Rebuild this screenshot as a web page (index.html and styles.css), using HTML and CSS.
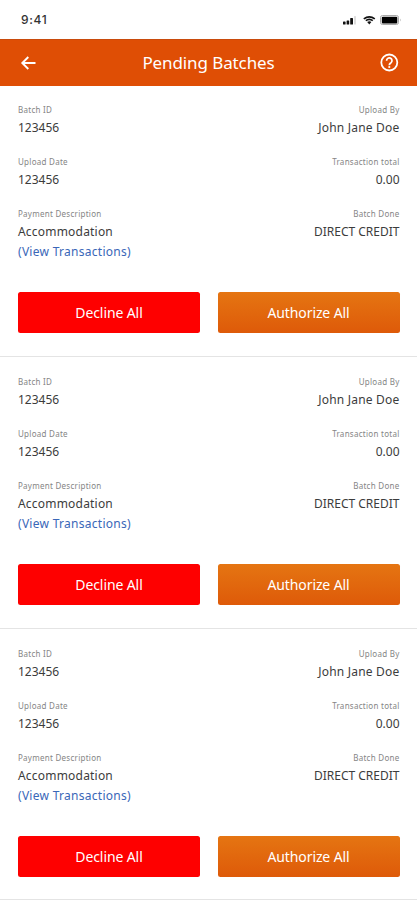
FILE: index.html
```html
<!DOCTYPE html>
<html lang="en">
<head>
<meta charset="utf-8">
<title>Pending Batches</title>
<link rel="stylesheet" href="styles.css">
</head>
<body>
<div class="status">
  <span class="time">9:41</span>
  <svg class="indicators" width="60" height="12" viewBox="0 0 60 12">
    <g fill="#111"><rect x="1" y="7.500" width="2.6" height="3" rx=".6"/><rect x="4.6" y="6.500" width="2.6" height="4" rx=".6"/><rect x="8.2" y="4" width="2.8" height="6.500" rx=".6"/></g>
    <rect x="12" y="2" width="2" height="8.500" rx=".6" fill="#ddd"/>
    <path d="M21.800 4.900Q27.300 .700 32.800 4.900M23.800 6.700Q27.300 4 30.800 6.700" fill="none" stroke="#111" stroke-width="1.700"/>
    <path d="M25.200 7.900Q27.300 6.400 29.400 7.900L27.300 10.400z" fill="#111"/>
    <rect x="38.500" y="1.500" width="18" height="9" rx="2" fill="#fff" stroke="#aaa"/>
    <rect x="39.800" y="2.700" width="15.500" height="6.700" rx="1" fill="#000"/>
    <path d="M58 4.500v3q1.300-1.500 0-3z" fill="#999"/>
  </svg>
</div>
<header class="bar">
  <svg class="icon" width="20" height="20" viewBox="0 0 20 20"><path d="M17.500 10H4.500M10.300 4L4.300 10l6 6" fill="none" stroke="#fff" stroke-width="1.900"/></svg>
  <h1>Pending Batches</h1>
  <svg class="icon" width="20" height="20" viewBox="0 0 20 20"><circle cx="10.300" cy="9.500" r="8" fill="none" stroke="#fff" stroke-width="1.800"/><path d="M7.600 7.700a2.700 2.700 0 1 1 4.500 1.900C11 10.500 10.300 10.800 10.300 12.200" fill="none" stroke="#fff" stroke-width="1.700"/><rect x="9.400" y="13.100" width="1.800" height="1.800" fill="#fff"/></svg>
</header>
<main>
  <section class="batch">
    <dl>
      <div><dt>Batch ID</dt><dd class="figure">123456</dd></div>
      <div><dt>Upload By</dt><dd>John Jane Doe</dd></div>
      <div><dt>Upload Date</dt><dd class="figure">123456</dd></div>
      <div><dt>Transaction total</dt><dd class="figure">0.00</dd></div>
      <div><dt>Payment Description</dt><dd>Accommodation</dd><dd class="link">(View Transactions)</dd></div>
      <div><dt>Batch Done</dt><dd class="figure">DIRECT CREDIT</dd></div>
    </dl>
    <div class="actions"><button class="decline">Decline All</button><button class="authorize">Authorize All</button></div>
  </section>
  <section class="batch">
    <dl>
      <div><dt>Batch ID</dt><dd class="figure">123456</dd></div>
      <div><dt>Upload By</dt><dd>John Jane Doe</dd></div>
      <div><dt>Upload Date</dt><dd class="figure">123456</dd></div>
      <div><dt>Transaction total</dt><dd class="figure">0.00</dd></div>
      <div><dt>Payment Description</dt><dd>Accommodation</dd><dd class="link">(View Transactions)</dd></div>
      <div><dt>Batch Done</dt><dd class="figure">DIRECT CREDIT</dd></div>
    </dl>
    <div class="actions"><button class="decline">Decline All</button><button class="authorize">Authorize All</button></div>
  </section>
  <section class="batch">
    <dl>
      <div><dt>Batch ID</dt><dd class="figure">123456</dd></div>
      <div><dt>Upload By</dt><dd>John Jane Doe</dd></div>
      <div><dt>Upload Date</dt><dd class="figure">123456</dd></div>
      <div><dt>Transaction total</dt><dd class="figure">0.00</dd></div>
      <div><dt>Payment Description</dt><dd>Accommodation</dd><dd class="link">(View Transactions)</dd></div>
      <div><dt>Batch Done</dt><dd class="figure">DIRECT CREDIT</dd></div>
    </dl>
    <div class="actions"><button class="decline">Decline All</button><button class="authorize">Authorize All</button></div>
  </section>
</main>
</body>
</html>
```
FILE: styles.css
```css
* { box-sizing: border-box; }
body { margin: 0; height: 900px; overflow: hidden; background: #fff; color: #3c3c3c; font-family: "Noto Sans", "Open Sans", sans-serif; }
.status { height: 39px; padding: 1px 15px 0 21px; display: flex; align-items: center; justify-content: space-between; }
.time { font: 500 12px/16px Inter, sans-serif; letter-spacing: .7px; color: #333; }
.indicators { display: block; }
.bar { height: 47px; padding: 0 18px; display: flex; align-items: center; justify-content: space-between; background: #df4e05; border-top: 1px solid #c94b0c; color: #fff; }
.bar h1 { margin: 0; font-size: 17px; line-height: 24px; font-weight: 400; letter-spacing: -.1px; }
.icon { display: block; }
.batch { height: 271px; padding: 17px 17.500px 0 18px; border-bottom: 1px solid #e4e4e4; }
.batch:nth-child(2) { height: 272px; }
.batch + .batch { padding-top: 18px; }
dl { margin: 0; display: grid; grid-template-columns: 1fr 1fr; grid-template-rows: 52px 52px 85px; }
dl > div:nth-child(even) { text-align: right; }
dt { font-size: 8px; line-height: 14px; letter-spacing: .27px; color: #858585; }
dd { margin: 0; font-size: 12px; line-height: 20px; letter-spacing: .2px; }
dt + dd { margin-top: 1px; }
.figure { letter-spacing: 0; }
.link { color: #3a67b8; letter-spacing: .28px; }
.actions { display: grid; grid-template-columns: 1fr 1fr; gap: 17.500px; }
button { height: 41px; padding: 0; border: 0; border-radius: 2.500px; color: #fff; font: 400 14px/20px "Noto Sans", sans-serif; letter-spacing: -.1px; }
.decline { background: #fe0000; }
.authorize { background: linear-gradient(#e57512, #de5a09); }
```
